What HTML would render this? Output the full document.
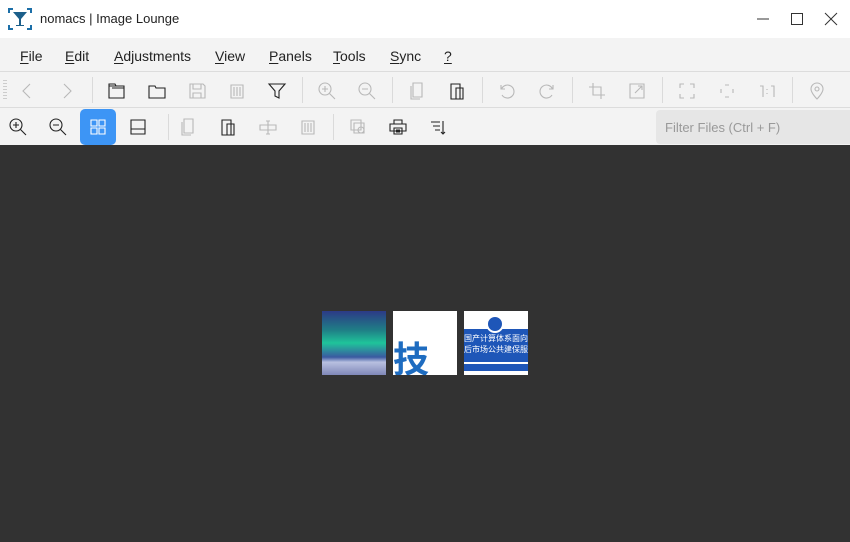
<!DOCTYPE html>
<html><head><meta charset="utf-8"><style>
*{margin:0;padding:0;box-sizing:border-box}
body{width:850px;height:542px;overflow:hidden;font-family:"Liberation Sans","Noto Sans CJK SC",sans-serif;background:#323232;position:relative}
.a{position:absolute}
#title{left:0;top:0;width:850px;height:38px;background:#fff}
#menu{left:0;top:38px;width:850px;height:34px;background:#f3f3f3;border-bottom:1px solid #dcdcdc}
#tb1{left:0;top:72px;width:850px;height:36px;background:#f3f3f3;border-bottom:1px solid #dcdcdc}
#tb2{left:0;top:108px;width:850px;height:37px;background:#f3f3f3}
.m{position:absolute;top:10px;font-size:14px;color:#222}
.m u{text-decoration:underline;text-underline-offset:2px}
.sep{position:absolute;width:1px;height:26px;background:#dadada}
svg.i{position:absolute;width:20px;height:20px;fill:none;stroke-width:1.1}
.d{stroke:#222}.g{stroke:#b8b8b8}
</style></head><body>
<div id="title" class="a">
<svg class="a" style="left:8px;top:8px" width="24" height="22" viewBox="0 0 24 22"><g stroke="#1c6fa8" stroke-width="2" fill="none"><path d="M1 5V1h4M19 1h4v4M1 17v4h4M23 17v4h-4"/></g><path d="M5 4h14l-6 7v6h3v1H8v-1h3v-6z" fill="#1c5f8a"/></svg>
<div class="a" style="left:40px;top:11px;font-size:13px;color:#222">nomacs | Image Lounge</div>
<svg class="a" width="14" height="14" style="left:756px;top:12px"><path d="M1 7h12" stroke="#333"/></svg>
<svg class="a" width="14" height="14" style="left:790px;top:12px"><rect x="1.5" y="1.5" width="11" height="11" fill="none" stroke="#333"/></svg>
<svg class="a" width="14" height="14" style="left:824px;top:12px"><path d="M1 1l12 12M13 1L1 13" stroke="#333"/></svg>
</div>
<div id="menu" class="a">
<span class="m" style="left:20px"><u>F</u>ile</span>
<span class="m" style="left:65px"><u>E</u>dit</span>
<span class="m" style="left:114px"><u>A</u>djustments</span>
<span class="m" style="left:215px"><u>V</u>iew</span>
<span class="m" style="left:269px"><u>P</u>anels</span>
<span class="m" style="left:333px"><u>T</u>ools</span>
<span class="m" style="left:390px"><u>S</u>ync</span>
<span class="m" style="left:444px"><u>?</u></span>
</div>
<div id="tb1" class="a">
<div class="a" style="left:3px;top:8px;width:4px;height:20px;background:repeating-linear-gradient(#ccc 0 1px,transparent 1px 3px)"></div>
<svg class="i g" style="left:17px;top:9px" viewBox="0 0 20 20"><path d="M13 3L6 10l7 7"/></svg>
<svg class="i g" style="left:57px;top:9px" viewBox="0 0 20 20"><path d="M7 3l7 7-7 7"/></svg>
<div class="sep" style="left:92px;top:5px"></div>
<svg class="i d" style="left:107px;top:9px" viewBox="0 0 20 20"><path d="M2 5h15v12H2zM2 5V3h6l1 2M5 7h12"/></svg>
<svg class="i d" style="left:147px;top:9px" viewBox="0 0 20 20"><path d="M2 5h6l1 2h9v10H2z"/></svg>
<svg class="i g" style="left:187px;top:9px" viewBox="0 0 20 20"><path d="M3 3h13l2 2v12H3zM6 3v5h8V3M6 17v-5h8v5"/></svg>
<svg class="i g" style="left:227px;top:9px" viewBox="0 0 20 20"><path d="M4 4h12v13H4zM7 6v9M10 6v9M13 6v9"/></svg>
<svg class="i d" style="left:267px;top:9px" viewBox="0 0 20 20"><path d="M2 3h16l-6 7v7l-4-2v-5z"/></svg>
<div class="sep" style="left:302px;top:5px"></div>
<svg class="i g" style="left:317px;top:9px" viewBox="0 0 20 20"><circle cx="8" cy="8" r="6"/><path d="M12.5 12.5L18 18M5 8h6M8 5v6"/></svg>
<svg class="i g" style="left:357px;top:9px" viewBox="0 0 20 20"><circle cx="8" cy="8" r="6"/><path d="M12.5 12.5L18 18M5 8h6"/></svg>
<div class="sep" style="left:392px;top:5px"></div>
<svg class="i g" style="left:407px;top:9px" viewBox="0 0 20 20"><path d="M6 2h9v14H6zM4 5v13h9"/></svg>
<svg class="i d" style="left:447px;top:9px" viewBox="0 0 20 20"><path d="M4 3h9v15H4zM9 7h7v11H9z"/></svg>
<div class="sep" style="left:482px;top:5px"></div>
<svg class="i g" style="left:497px;top:9px" viewBox="0 0 20 20"><path d="M4 4v4h4M4.5 8A6.5 6.5 0 1 1 5 14"/></svg>
<svg class="i g" style="left:537px;top:9px" viewBox="0 0 20 20"><path d="M16 4v4h-4M15.5 8A6.5 6.5 0 1 0 15 14"/></svg>
<div class="sep" style="left:572px;top:5px"></div>
<svg class="i g" style="left:587px;top:9px" viewBox="0 0 20 20"><path d="M6 2v12h12M2 6h12v12"/></svg>
<svg class="i g" style="left:627px;top:9px" viewBox="0 0 20 20"><path d="M3 3h14v14H3zM8 12l7-7M11 5h4v4"/></svg>
<div class="sep" style="left:662px;top:5px"></div>
<svg class="i g" style="left:677px;top:9px" viewBox="0 0 20 20"><path d="M3 7V3h4M13 3h4v4M3 13v4h4M17 13v4h-4"/></svg>
<svg class="i g" style="left:717px;top:9px" viewBox="0 0 20 20"><path d="M8 4h4M8 16h4M4 8v4M16 8v4"/></svg>
<svg class="i g" style="left:757px;top:9px" viewBox="0 0 20 20"><path d="M3 5h3v11M14 5h3v11M10 8v1M10 12v1"/></svg>
<div class="sep" style="left:792px;top:5px"></div>
<svg class="i g" style="left:807px;top:9px" viewBox="0 0 20 20"><path d="M10 18s-6-6-6-10a6 6 0 0 1 12 0c0 4-6 10-6 10z"/><circle cx="10" cy="8" r="2"/></svg>
</div>
<div id="tb2" class="a">
<svg class="i d" style="left:8px;top:9px" viewBox="0 0 20 20"><circle cx="8" cy="8" r="6"/><path d="M12.5 12.5L18 18M5 8h6M8 5v6"/></svg>
<svg class="i d" style="left:48px;top:9px" viewBox="0 0 20 20"><circle cx="8" cy="8" r="6"/><path d="M12.5 12.5L18 18M5 8h6"/></svg>
<div class="a" style="left:80px;top:1px;width:36px;height:36px;background:#3d95f5;border-radius:5px"></div>
<svg class="i" style="left:88px;top:9px;stroke:#fff" viewBox="0 0 20 20"><path d="M3 3h6v6H3zM11 3h6v6h-6zM3 11h6v6H3zM11 11h6v6h-6z"/></svg>
<svg class="i d" style="left:128px;top:9px" viewBox="0 0 20 20"><path d="M3 3h14v14H3zM3 12h14"/></svg>
<div class="sep" style="left:168px;top:6px"></div>
<svg class="i g" style="left:178px;top:9px" viewBox="0 0 20 20"><path d="M6 2h9v14H6zM4 5v13h9"/></svg>
<svg class="i d" style="left:218px;top:9px" viewBox="0 0 20 20"><path d="M4 3h9v15H4zM9 7h7v11H9z"/></svg>
<svg class="i g" style="left:258px;top:9px" viewBox="0 0 20 20"><path d="M2 8h16v5H2zM10 4v13M8 4h4M8 17h4"/></svg>
<svg class="i g" style="left:298px;top:9px" viewBox="0 0 20 20"><path d="M4 4h12v13H4zM7 6v9M10 6v9M13 6v9"/></svg>
<div class="sep" style="left:333px;top:6px"></div>
<svg class="i g" style="left:348px;top:9px" viewBox="0 0 20 20"><path d="M3 3h10v10H3zM6 6h10v10H6z"/><circle cx="13" cy="13" r="3"/></svg>
<svg class="i d" style="left:388px;top:9px" viewBox="0 0 20 20"><path d="M6 3h8v4H6zM2 7h16v7H2zM6 11h8v6H6zM8 13h4M8 15h4"/></svg>
<svg class="i d" style="left:428px;top:9px" viewBox="0 0 20 20"><path d="M3 5h9M5 9h7M7 13h5M15 4v13M13 15l2 2 2-2"/></svg>
<div class="a" style="left:656px;top:2px;width:194px;height:34px;background:#e6e6e6;border-radius:4px 0 0 4px"></div>
<div class="a" style="left:665px;top:12px;font-size:13px;color:#999">Filter Files (Ctrl + F)</div>
</div>
<div class="a" style="left:322px;top:311px;width:64px;height:64px;background:linear-gradient(180deg,#2c3a86 0%,#1f7f86 30%,#1fc49a 50%,#3a5aa0 72%,#b8c0e0 80%,#8088b8 100%)"></div>
<div class="a" style="left:393px;top:311px;width:64px;height:64px;background:#fff;overflow:hidden"><div class="a" style="left:0px;top:26px;font-size:36px;font-weight:bold;color:#1e6cc0;font-family:'Noto Sans CJK SC',sans-serif;line-height:40px">技术</div></div>
<div class="a" style="left:464px;top:311px;width:64px;height:64px;background:#fff;overflow:hidden">
<div class="a" style="left:0;top:18px;width:64px;height:33px;background:#1e56b8"></div>
<div class="a" style="left:22px;top:4px;width:18px;height:18px;border-radius:50%;background:#1e56b8;border:2px solid #fff"></div>
<div class="a" style="left:0;top:22px;font-size:8px;line-height:11px;color:#fff;white-space:nowrap;font-family:'Noto Sans CJK SC',sans-serif">国产计算体系面向工<br>后市场公共建保服务平</div>
<div class="a" style="left:0;top:53px;width:64px;height:7px;background:#1e56b8"></div>
</div>
</body></html>
